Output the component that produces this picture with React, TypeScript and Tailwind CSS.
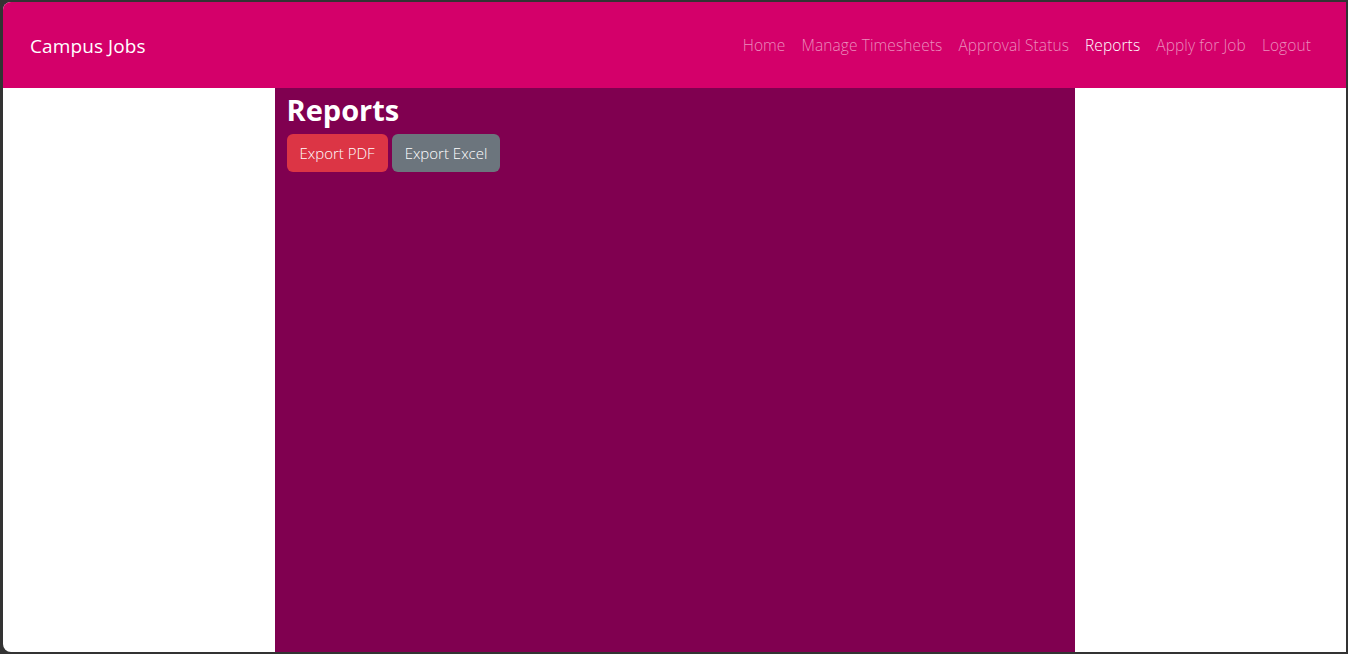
const links = [
  { label: "Home", active: false },
  { label: "Manage Timesheets", active: false },
  { label: "Approval Status", active: false },
  { label: "Reports", active: true },
  { label: "Apply for Job", active: false },
  { label: "Logout", active: false },
];

export default function App() {
  return (
    <div
      className="h-screen bg-[#333333] pt-[2px] pl-[3px] pr-[2px] pb-[2px]"
      style={{ fontFamily: '"Open Sans", "Noto Sans", sans-serif' }}
    >
      <div className="flex h-full flex-col overflow-hidden rounded-l-[8px] bg-white">
        <header className="flex h-[86px] shrink-0 items-center justify-between bg-[#d4006a] pl-[27px] pr-[35px]">
          <a className="pt-[3px] text-[19px] tracking-[0.1px] text-white">Campus Jobs</a>
          <nav className="flex items-center gap-4 pt-[1px]">
            {links.map((l) => (
              <a
                key={l.label}
                className={
                  l.active
                    ? "text-[15.5px] font-light tracking-[0.1px] text-white"
                    : "text-[15.5px] font-light tracking-[0.1px] text-[#eb8cbb]"
                }
              >
                {l.label}
              </a>
            ))}
          </nav>
        </header>
        <main className="flex flex-1 justify-center">
          <div className="w-[800px] bg-[#800050] px-3">
            <h1 className="pt-[2px] text-[29px] font-bold leading-[40px] text-white">
              Reports
            </h1>
            <div className="mt-[4px] flex gap-1">
              <button className="h-[38px] rounded-[6px] bg-[#dc3545] px-[13px] text-[15px] font-light text-white">
                Export PDF
              </button>
              <button className="h-[38px] rounded-[6px] bg-[#6c757d] px-[13px] text-[15px] font-light text-white">
                Export Excel
              </button>
            </div>
          </div>
        </main>
      </div>
    </div>
  );
}
